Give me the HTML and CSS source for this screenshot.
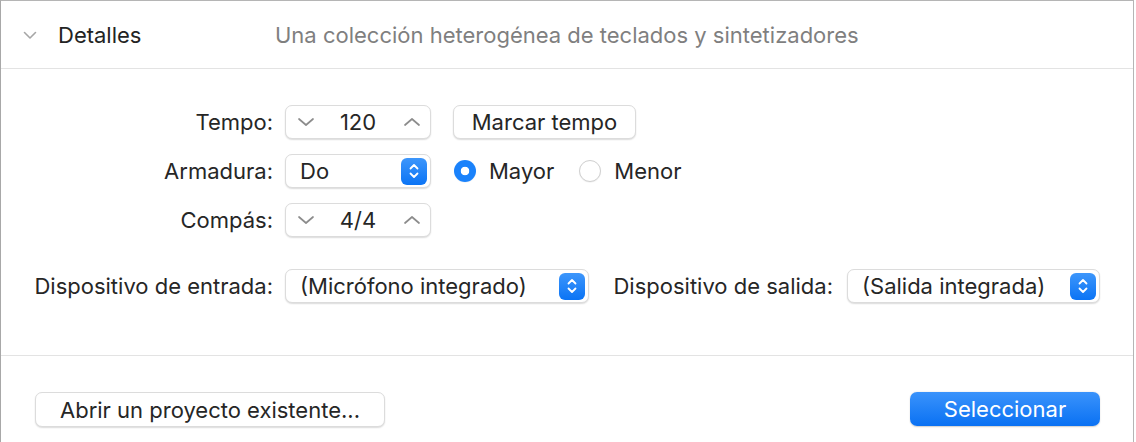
FILE: index.html
```html
<!DOCTYPE html>
<html lang="es">
<head>
<meta charset="utf-8">
<title>Detalles</title>
<link rel="stylesheet" href="styles.css">
</head>
<body>
<div class="panel">
  <header class="head">
    <svg class="disclosure" width="14" height="9" viewBox="0 0 14 9"><path d="M1.5 1.5 L7 7 L12.5 1.5" fill="none" stroke="#a6a6a6" stroke-width="1.6" stroke-linecap="round" stroke-linejoin="round"/></svg>
    <span class="title">Detalles</span>
    <span class="desc">Una colección heterogénea de teclados y sintetizadores</span>
  </header>

  <section class="form">
    <div class="grid">
      <span class="label">Tempo:</span>
      <div class="stepper">
        <svg class="chev" width="18" height="10" viewBox="0 0 18 10"><path d="M2 2 L9 8 L16 2" fill="none" stroke="#8c8c8c" stroke-width="1.7" stroke-linecap="round" stroke-linejoin="round"/></svg>
        <span class="val">120</span>
        <svg class="chev" width="18" height="10" viewBox="0 0 18 10"><path d="M2 8 L9 2 L16 8" fill="none" stroke="#8c8c8c" stroke-width="1.7" stroke-linecap="round" stroke-linejoin="round"/></svg>
      </div>
      <div class="extra"><button class="btn tap">Marcar tempo</button></div>

      <span class="label">Armadura:</span>
      <div class="popup">
        <span class="ptext">Do</span>
        <span class="arrows"><svg width="12" height="18" viewBox="0 0 12 18"><path d="M2.5 6.5 L6 3 L9.5 6.5 M2.5 11.5 L6 15 L9.5 11.5" fill="none" stroke="#fff" stroke-width="1.8" stroke-linecap="round" stroke-linejoin="round"/></svg></span>
      </div>
      <div class="extra radios">
        <span class="radio"><span class="dot on"></span>Mayor</span>
        <span class="radio"><span class="dot"></span>Menor</span>
      </div>

      <span class="label">Compás:</span>
      <div class="stepper">
        <svg class="chev" width="18" height="10" viewBox="0 0 18 10"><path d="M2 2 L9 8 L16 2" fill="none" stroke="#8c8c8c" stroke-width="1.7" stroke-linecap="round" stroke-linejoin="round"/></svg>
        <span class="val">4/4</span>
        <svg class="chev" width="18" height="10" viewBox="0 0 18 10"><path d="M2 8 L9 2 L16 8" fill="none" stroke="#8c8c8c" stroke-width="1.7" stroke-linecap="round" stroke-linejoin="round"/></svg>
      </div>
      <div class="extra"></div>
    </div>

    <div class="devices">
      <span class="label in-label">Dispositivo de entrada:</span>
      <div class="popup wide-in">
        <span class="ptext">(Micrófono integrado)</span>
        <span class="arrows"><svg width="12" height="18" viewBox="0 0 12 18"><path d="M2.5 6.5 L6 3 L9.5 6.5 M2.5 11.5 L6 15 L9.5 11.5" fill="none" stroke="#fff" stroke-width="1.8" stroke-linecap="round" stroke-linejoin="round"/></svg></span>
      </div>
      <span class="label out-label">Dispositivo de salida:</span>
      <div class="popup wide-out">
        <span class="ptext">(Salida integrada)</span>
        <span class="arrows"><svg width="12" height="18" viewBox="0 0 12 18"><path d="M2.5 6.5 L6 3 L9.5 6.5 M2.5 11.5 L6 15 L9.5 11.5" fill="none" stroke="#fff" stroke-width="1.8" stroke-linecap="round" stroke-linejoin="round"/></svg></span>
      </div>
    </div>
  </section>

  <footer class="foot">
    <button class="btn open">Abrir un proyecto existente...</button>
    <button class="btn primary">Seleccionar</button>
  </footer>
</div>
</body>
</html>
```

FILE: styles.css
```css
* { box-sizing: border-box; }
html, body { margin: 0; padding: 0; background: #fff; }
body {
  font-family: Inter, "Noto Sans", "Liberation Sans", sans-serif;
  font-size: 22px;
  color: #262626;
  width: 1136px;
  height: 442px;
  overflow: hidden;
}
.panel {
  width: 1134px;
  height: 442px;
  border-top: 1px solid #b5b5b5;
  border-left: 1px solid #a8a8a8;
  border-right: 1px solid #b5b5b5;
  display: flex;
  flex-direction: column;
}
.head {
  height: 68px;
  border-bottom: 1px solid #e3e3e3;
  display: flex;
  align-items: center;
  padding-left: 22px;
  flex: none;
}
.disclosure { margin-top: 1px; flex: none; }
.title { margin-left: 21px; width: 217px; color: #232323; flex: none; }
.desc { color: #7f7f7f; white-space: nowrap; }

.form {
  padding-top: 36px;
  height: 287px;
  border-bottom: 1px solid #e3e3e3;
  flex: none;
}
.grid {
  display: grid;
  grid-template-columns: 272px 146px 1fr;
  grid-auto-rows: 34px;
  column-gap: 12px;
  row-gap: 15px;
  align-items: center;
}
.label { text-align: right; color: #262626; white-space: nowrap; }
.stepper, .popup, .btn {
  background: #fff;
  border: 1px solid #dcdcdc;
  border-radius: 7px;
  box-shadow: 0 1px 1.5px rgba(0,0,0,0.14);
  height: 34px;
}
.stepper {
  display: flex;
  align-items: center;
  justify-content: space-between;
  padding: 0 9px 0 11px;
}
.val { flex: 1; text-align: center; padding-right: 2px; }
.popup {
  display: flex;
  align-items: center;
  justify-content: space-between;
  padding: 0 3px 0 14px;
  white-space: nowrap;
}
.arrows {
  width: 26px;
  height: 27px;
  border-radius: 6px;
  background: linear-gradient(#3d96fb, #0b74f5);
  display: flex;
  align-items: center;
  justify-content: center;
  flex: none;
}
.extra { padding-left: 10px; display: flex; align-items: center; }
.btn {
  font: inherit;
  color: #262626;
  padding: 0 10px;
  display: inline-flex;
  align-items: center;
  justify-content: center;
  white-space: nowrap;
}
.tap { width: 183px; }
.radio { display: inline-flex; align-items: center; margin-right: 24px; }
.dot {
  width: 22px;
  height: 22px;
  border-radius: 50%;
  border: 1px solid #d0d0d0;
  background: #fff;
  box-shadow: 0 0.5px 1px rgba(0,0,0,0.08);
  margin-right: 13px;
  margin-left: 1px;
}
.dot.on {
  border: none;
  background: radial-gradient(circle, #fff 0 4px, #1a82fb 4.6px);
}

.devices {
  display: flex;
  align-items: center;
  margin-top: 32px;
  height: 34px;
}
.devices .in-label { width: 272px; flex: none; }
.wide-in { width: 304px; margin-left: 12px; flex: none; }
.devices .out-label { width: 244px; flex: none; }
.wide-out { width: 253px; margin-left: 14px; flex: none; }

.foot {
  flex: 1;
  display: flex;
  justify-content: space-between;
  align-items: flex-start;
  padding: 36px 33px 0 34px;
}
.open { width: 350px; height: 35px; }
.primary {
  width: 190px;
  border: none;
  color: #fff;
  background: linear-gradient(#3a93fb, #0a71f3);
  box-shadow: 0 0.5px 1.5px rgba(0,0,0,0.2);
}
```
